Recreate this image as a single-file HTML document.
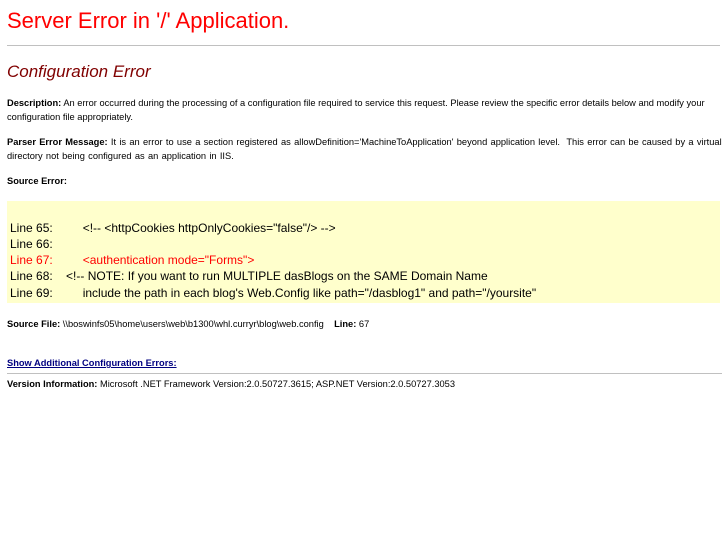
<!DOCTYPE html>
<html><head><style>
body{margin:0;background:#fff;font-family:"Liberation Sans",Arial,sans-serif;color:#000;width:727px;height:545px;position:relative;overflow:hidden}
.a{position:absolute;white-space:nowrap}
.s{font-size:9.3px;line-height:14px}
b{font-weight:bold}
.code{position:absolute;left:7px;top:201px;width:713px;height:102px;background:#ffffcc}
.cl{position:absolute;left:3px;font-size:12px;line-height:16px;white-space:pre}
hr{position:absolute;margin:0;border:0;height:1px;background:#c0c0c0}
</style></head><body>
<div class="a" style="left:7px;top:8px;font-size:22px;line-height:26px;color:#ff0000">Server Error in '/' Application.</div>
<hr style="left:7px;top:45px;width:713px">
<div class="a" style="left:7px;top:61px;font-size:17px;line-height:22px;color:#800000;font-style:italic">Configuration Error</div>
<div class="a s" style="left:7px;top:96px"><b>Description:</b> An error occurred during the processing of a configuration file required to service this request. Please review the specific error details below and modify your<br>configuration file appropriately.</div>
<div class="a s" style="left:7px;top:135px;word-spacing:0.7px"><b>Parser Error Message:</b> It is an error to use a section registered as allowDefinition='MachineToApplication' beyond application level.&nbsp; This error can be caused by a virtual<br>directory not being configured as an application in IIS.</div>
<div class="a s" style="left:7px;top:174px"><b>Source Error:</b></div>
<div class="code">
<div class="cl" style="top:19px">Line 65:         &lt;!-- &lt;httpCookies httpOnlyCookies="false"/&gt; --&gt;</div>
<div class="cl" style="top:35px">Line 66:</div>
<div class="cl" style="top:51px;color:#ff0000">Line 67:         &lt;authentication mode="Forms"&gt;</div>
<div class="cl" style="top:67px">Line 68:    &lt;!-- NOTE: If you want to run MULTIPLE dasBlogs on the SAME Domain Name</div>
<div class="cl" style="top:84px">Line 69:         include the path in each blog's Web.Config like path="/dasblog1" and path="/yoursite"</div>
</div>
<div class="a s" style="left:7px;top:317px"><b>Source File:</b> \\boswinfs05\home\users\web\b1300\whl.curryr\blog\web.config &nbsp;&nbsp; <b>Line:</b> 67</div>
<div class="a s" style="left:7px;top:356px"><a style="color:#000080;font-weight:bold;text-decoration:underline">Show Additional Configuration Errors:</a></div>
<hr style="left:7px;top:373px;width:715px">
<div class="a s" style="left:7px;top:377px"><b>Version Information:</b> Microsoft .NET Framework Version:2.0.50727.3615; ASP.NET Version:2.0.50727.3053</div>
</body></html>
